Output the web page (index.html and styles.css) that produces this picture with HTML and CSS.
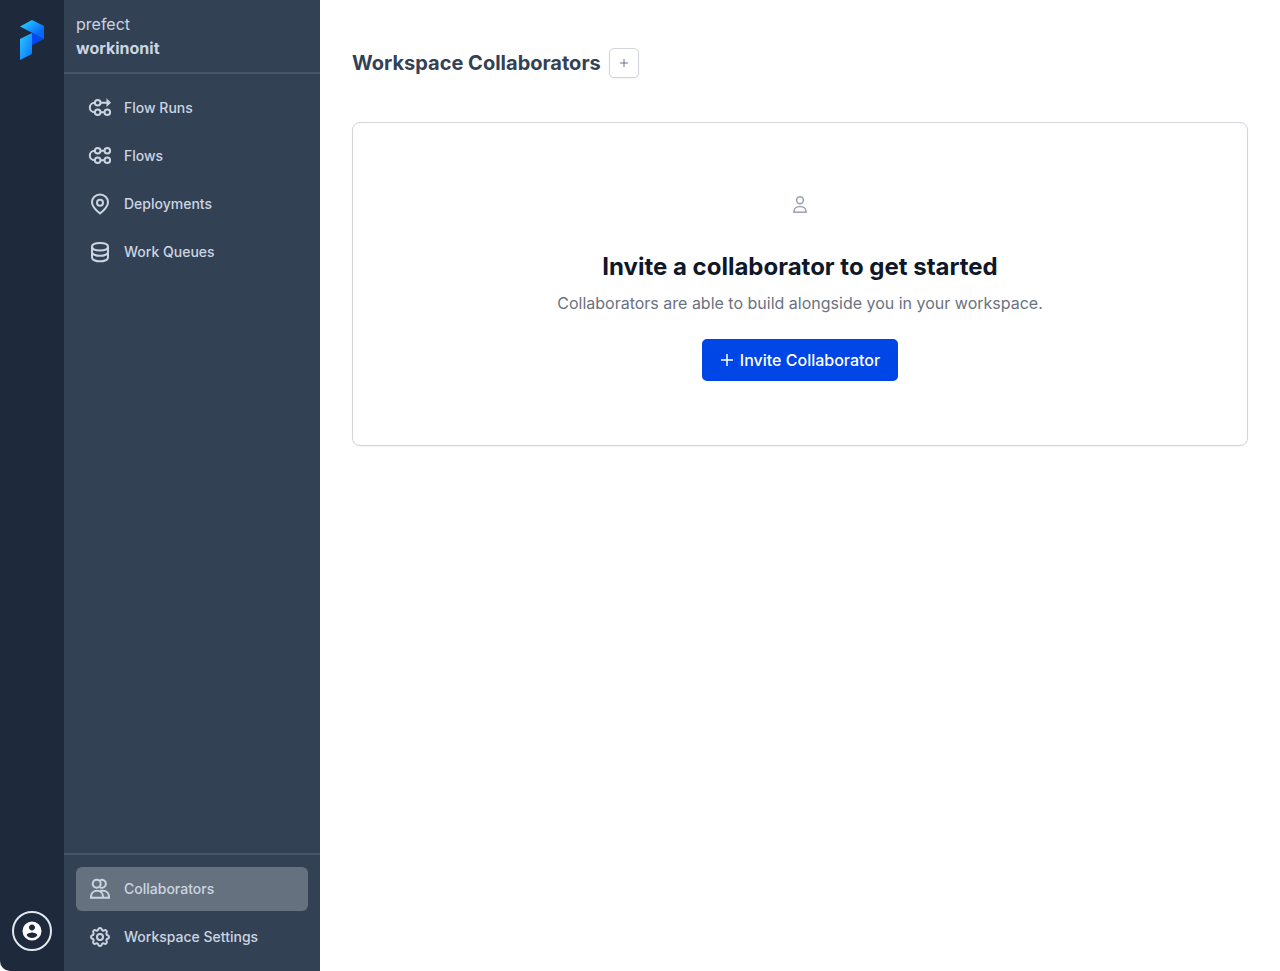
FILE: index.html
```html
<!DOCTYPE html>
<html lang="en">
<head>
<meta charset="utf-8">
<meta name="viewport" content="width=device-width, initial-scale=1">
<title>Workspace Collaborators</title>
<link rel="stylesheet" href="styles.css">
</head>
<body>
<div class="app">
  <aside class="rail">
    <a class="logo" href="#" aria-label="Prefect home">
      <svg width="24" height="40" viewBox="0 0 24 40" aria-hidden="true">
        <defs>
          <linearGradient id="top" x1="0" y1="0" x2="1" y2="1"><stop offset="0.1" stop-color="#27cfff"/><stop offset="0.75" stop-color="#0568ff"/></linearGradient>
          <linearGradient id="left" x1="0" y1="0" x2="1" y2="1"><stop offset="0" stop-color="#2cc8ff"/><stop offset="1" stop-color="#0872ff"/></linearGradient>
        </defs>
        <path d="M12 13L24 19L12 25Z" fill="#0048f0"/>
        <path d="M0 6.500L12 0L24 6V19Z" fill="url(#top)"/>
        <path d="M0 19L12 13V34L0 40Z" fill="url(#left)"/>
      </svg>
    </a>
    <button class="avatar" type="button" aria-label="Account">
      <svg width="24" height="24" viewBox="0 0 24 24" aria-hidden="true"><path fill="currentColor" d="M12 2.500a9.500 9.500 0 1 0 0 19a9.500 9.500 0 0 0 0-19zm0 3c1.660 0 3 1.340 3 3s-1.340 3-3 3-3-1.340-3-3 1.340-3 3-3zm0 13.500c-2.200 0-4.200-1-5.300-2.700.03-1.800 3.500-2.800 5.300-2.800s5.270 1 5.300 2.800C16.200 18 14.200 19 12 19z"/></svg>
    </button>
  </aside>
  <aside class="sidebar">
    <header class="workspace">
      <span>prefect</span>
      <strong class="workspace-name">workinonit</strong>
    </header>
    <nav class="nav" aria-label="Workspace">
      <a class="nav-item" href="#">
        <svg class="icon flow" viewBox="0 0 24 24" aria-hidden="true"><circle cx="9.700" cy="6.700" r="2.800"/><circle cx="9.700" cy="16.300" r="2.800"/><circle cx="19.300" cy="16.300" r="2.800"/><path d="M6.900 6.700H6.600a4.800 4.800 0 0 0 0 9.600H6.900M12.500 16.300h4M12.500 6.700h7"/><path class="solid" d="M18.500 2.300L23 6.700L18.500 11.100Z"/></svg>
        Flow Runs
      </a>
      <a class="nav-item" href="#">
        <svg class="icon flow" viewBox="0 0 24 24" aria-hidden="true"><circle cx="9.700" cy="6.700" r="2.800"/><circle cx="19.300" cy="6.700" r="2.800"/><circle cx="9.700" cy="16.300" r="2.800"/><circle cx="19.300" cy="16.300" r="2.800"/><path d="M6.900 6.700H6.600a4.800 4.800 0 0 0 0 9.600H6.900M12.500 16.300h4M12.500 6.700h4"/></svg>
        Flows
      </a>
      <a class="nav-item" href="#">
        <svg class="icon" viewBox="0 0 24 24" aria-hidden="true"><path d="M12 21.500c-2-1.600-8-6.200-8-11.200a8 7.800 0 0 1 16 0c0 5-6 9.600-8 11.200z"/><circle cx="12" cy="10.700" r="3"/></svg>
        Deployments
      </a>
      <a class="nav-item" href="#">
        <svg class="icon" viewBox="0 0 24 24" aria-hidden="true"><path d="M4 6.500C4 4.300 7 3 12 3s8 1.300 8 3.500S17 10.500 12 10.500 4 8.700 4 6.500zM4 6.500v11c0 2.200 3.600 3.800 8 3.800s8-1.600 8-3.800v-11M4 12c0 2.200 3.600 3.800 8 3.800s8-1.600 8-3.800"/></svg>
        Work Queues
      </a>
    </nav>
    <nav class="nav nav-bottom" aria-label="Administration">
      <a class="nav-item active" href="#" aria-current="page">
        <svg class="icon" viewBox="0 0 24 24" aria-hidden="true"><circle cx="8.700" cy="6.800" r="4"/><path d="M12 3.300a4 4 0 1 1 0 7M3 20.800v-1c0-3.500 2.600-6 6-6s6 2.500 6 6v1zM12 13.800h3c3.400 0 6 2.500 6 6v1h-6"/></svg>
        Collaborators
      </a>
      <a class="nav-item" href="#">
        <svg class="icon" viewBox="0 0 24 24" aria-hidden="true"><path d="M10.325 4.317c.426-1.756 2.924-1.756 3.350 0a1.724 1.724 0 0 0 2.573 1.066c1.543-.94 3.310.826 2.370 2.370a1.724 1.724 0 0 0 1.065 2.572c1.756.426 1.756 2.924 0 3.350a1.724 1.724 0 0 0-1.066 2.573c.94 1.543-.826 3.310-2.370 2.370a1.724 1.724 0 0 0-2.572 1.065c-.426 1.756-2.924 1.756-3.350 0a1.724 1.724 0 0 0-2.573-1.066c-1.543.94-3.310-.826-2.370-2.370a1.724 1.724 0 0 0-1.065-2.572c-1.756-.426-1.756-2.924 0-3.350a1.724 1.724 0 0 0 1.066-2.573c-.94-1.543.826-3.310 2.370-2.370.996.608 2.296.07 2.572-1.065z"/><circle cx="12" cy="12" r="3"/></svg>
        Workspace Settings
      </a>
    </nav>
  </aside>
  <main class="main">
    <div class="page-heading">
      <h1 class="page-title">Workspace Collaborators</h1>
      <button class="add" type="button" aria-label="Add collaborator">
        <svg width="10" height="10" viewBox="0 0 10 10" aria-hidden="true"><path d="M5 1v8M1 5h8" stroke="currentColor"/></svg>
      </button>
    </div>
    <section class="card">
      <svg class="person" viewBox="0 0 24 24" aria-hidden="true"><circle cx="12" cy="7.200" r="3.400"/><path d="M6 19.300v-.8c0-3 2.600-5 6-5s6 2 6 5v.8z"/></svg>
      <h2 class="card-title">Invite a collaborator to get started</h2>
      <p class="card-text">Collaborators are able to build alongside you in your workspace.</p>
      <button class="invite" type="button">
        <svg width="14" height="14" viewBox="0 0 14 14" aria-hidden="true"><path d="M7 1v12M1 7h12" stroke="currentColor" stroke-width="1.500"/></svg>
        Invite Collaborator
      </button>
    </section>
  </main>
</div>
</body>
</html>
```
FILE: styles.css
```css
* { box-sizing: border-box; }
body { margin: 0; background: #fff; font: 16px/24px Inter, "Liberation Sans", sans-serif; color: #0f172a; }
svg { display: block; flex: none; }
button { font: inherit; cursor: pointer; padding: 0; }
h1, h2, p { margin: 0; }

.app { display: flex; min-height: 100vh; }

.rail { width: 64px; flex: none; background: #1e293b; border-bottom-left-radius: 10px; display: flex; flex-direction: column; justify-content: space-between; align-items: center; padding: 20px 0; }
.avatar { width: 40px; height: 40px; display: flex; align-items: center; justify-content: center; border: 2px solid #e2e8f0; border-radius: 50%; background: none; color: #fff; }

.sidebar { width: 256px; flex: none; background: #334155; color: #cbd5e1; display: flex; flex-direction: column; }
.workspace { display: flex; flex-direction: column; padding: 12px; border-bottom: 2px solid #475569; }
.workspace-name { font-weight: 700; }
.nav { display: flex; flex-direction: column; gap: 4px; padding: 12px; }
.nav-bottom { margin-top: auto; border-top: 2px solid #475569; }
.nav-item { display: flex; align-items: center; gap: 12px; padding: 10px 12px; border-radius: 6px; color: inherit; text-decoration: none; font-size: 14px; font-weight: 500; }
.nav-item.active { background: #66717f; }
.icon { width: 24px; height: 24px; fill: none; stroke: currentColor; stroke-width: 2; }
.icon .solid { fill: currentColor; stroke: none; }

.main { flex: 1; min-width: 0; padding: 48px 32px; }
.page-heading { display: flex; align-items: center; gap: 8px; margin-bottom: 44px; }
.page-title { font-size: 20px; line-height: 28px; font-weight: 700; color: #334155; }
.add { width: 30px; height: 30px; display: flex; align-items: center; justify-content: center; border: 1px solid #d1d5db; border-radius: 5px; background: #fff; color: #6b7280; box-shadow: 0 1px 2px rgba(0, 0, 0, 0.05); }
.card { display: flex; flex-direction: column; align-items: center; padding: 64px 24px; border: 1px solid #d1d5db; border-radius: 8px; text-align: center; box-shadow: 0 1px 2px rgba(0, 0, 0, 0.05); }
.person { width: 24px; height: 36px; margin-bottom: 28px; fill: none; stroke: #9ca3af; stroke-width: 1.6; }
.card-title { font-size: 24px; line-height: 32px; font-weight: 700; margin-bottom: 8px; }
.card-text { color: #6b7280; margin-bottom: 24px; }
.invite { height: 42px; display: flex; align-items: center; gap: 6px; padding: 0 18px; border: 0; border-radius: 5px; background: #0045e6; color: #fff; font-weight: 500; }
```
